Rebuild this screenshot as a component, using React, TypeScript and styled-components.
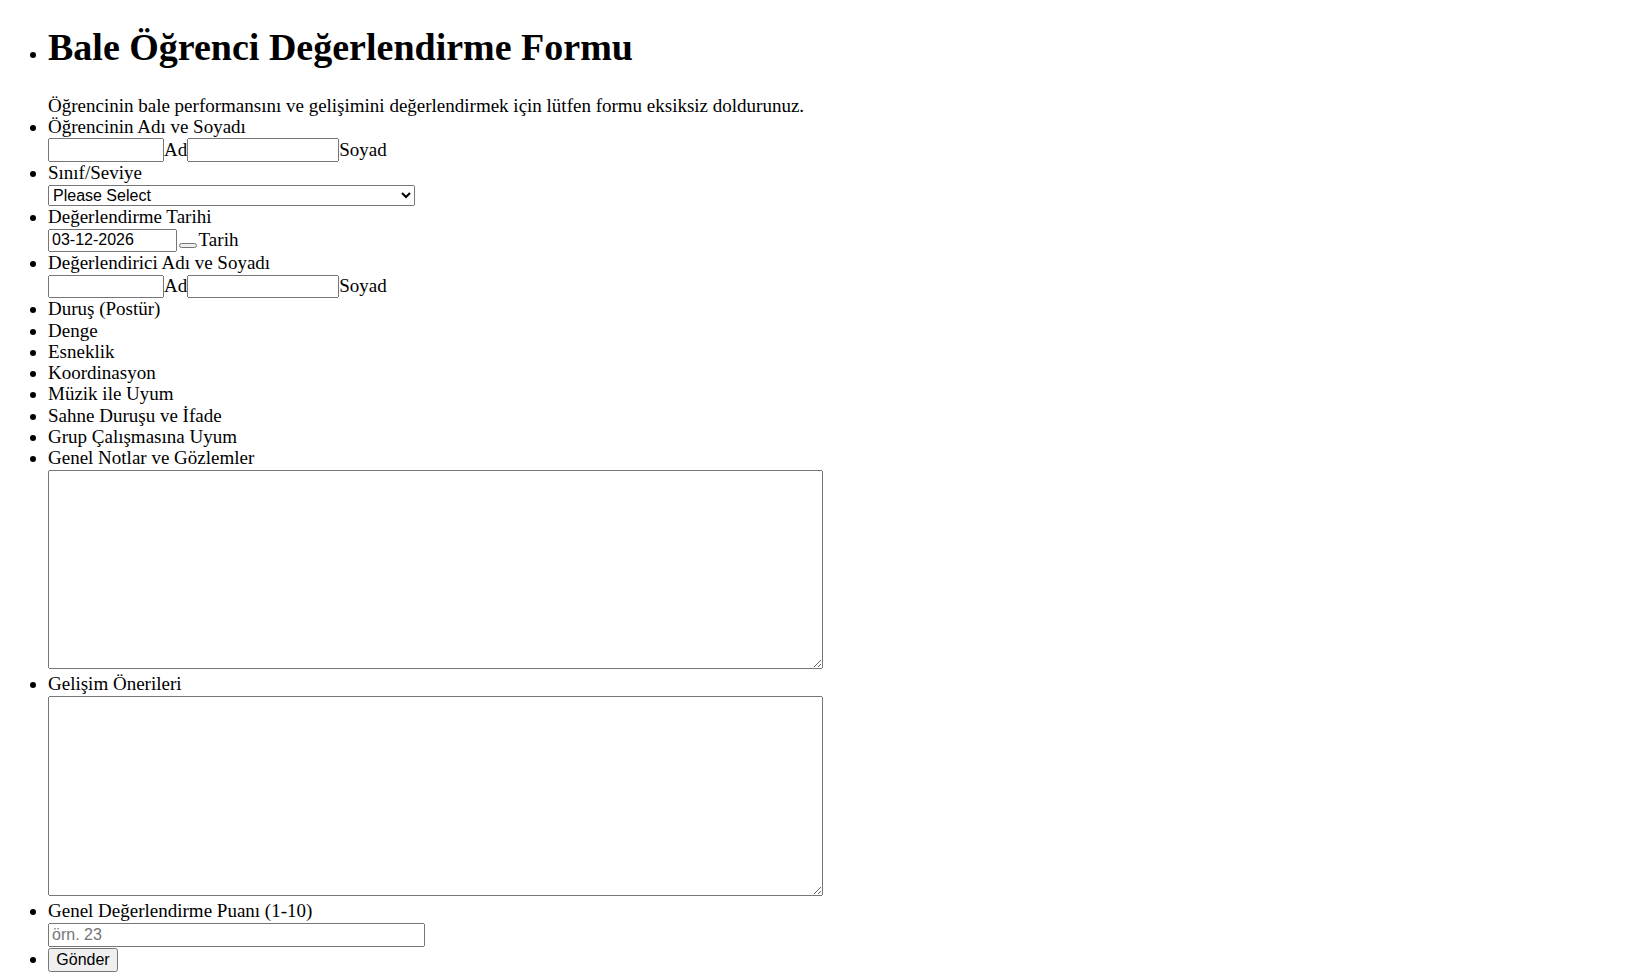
import React from "react";
import styled, { createGlobalStyle } from "styled-components";

const GlobalStyle = createGlobalStyle`
  html, body {
    margin: 0;
    padding: 0;
    background: #ffffff;
  }
  body {
    font-family: "Liberation Serif", "Times New Roman", serif;
    font-size: 19px;
    line-height: 21.3px;
    color: #000000;
  }
`;

const Form = styled.form`
  padding: 24.5px 8px 0 8px;
`;

const List = styled.ul`
  margin: 0;
  padding: 0 0 0 40px;
  list-style: disc outside;
`;

const Item = styled.li``;

const Title = styled.h1`
  margin: 0 0 26px 0;
  font-size: 38px;
  line-height: normal;
  font-weight: 700;
`;

const Intro = styled.div``;

const Label = styled.div``;

const Field = styled.div<{ $top: number; $bottom?: number }>`
  display: flex;
  align-items: flex-start;
  padding-top: ${(p) => p.$top}px;
  padding-bottom: ${(p) => p.$bottom ?? 0}px;
`;

const SubLabel = styled.label`
  margin-top: 0.3px;
  white-space: nowrap;
`;

const controlFont = `
  font-family: "Liberation Sans", Arial, sans-serif;
  font-size: 16px;
  line-height: normal;
`;

const TextInput = styled.input<{ $w: number }>`
  ${controlFont}
  box-sizing: border-box;
  width: ${(p) => p.$w}px;
  height: 23.4px;
  padding: 1px 2px;
  margin: 0;
  color: #000;
  flex: none;
`;

const Select = styled.select`
  ${controlFont}
  box-sizing: border-box;
  width: 367px;
  height: 21.4px;
  margin: 0;
  color: #000;
`;

const CalendarButton = styled.button`
  box-sizing: border-box;
  width: 18px;
  height: 5.6px;
  margin: 14px 2px 0 1.6px;
  padding: 0;
  flex: none;
`;

const NoteArea = styled.textarea<{ $h: number }>`
  box-sizing: border-box;
  width: 775px;
  height: ${(p) => p.$h}px;
  margin: 0;
  font-family: "Liberation Mono", monospace;
  font-size: 13px;
`;

const SubmitButton = styled.button`
  ${controlFont}
  box-sizing: border-box;
  width: 70px;
  height: 23.4px;
  padding: 1px 6px;
  margin: 1.6px 0 0 0;
  color: #000;
`;

const ratings = [
  "Duruş (Postür)",
  "Denge",
  "Esneklik",
  "Koordinasyon",
  "Müzik ile Uyum",
  "Sahne Duruşu ve İfade",
  "Grup Çalışmasına Uyum",
];

function NameField() {
  return (
    <Field $top={1.4}>
      <TextInput $w={116} type="text" />
      <SubLabel>Ad</SubLabel>
      <TextInput $w={152} type="text" />
      <SubLabel>Soyad</SubLabel>
    </Field>
  );
}

export default function App() {
  return (
    <>
      <GlobalStyle />
      <Form onSubmit={(e) => e.preventDefault()}>
        <List>
          <Item>
            <Title>Bale Öğrenci Değerlendirme Formu</Title>
            <Intro>
              Öğrencinin bale performansını ve gelişimini değerlendirmek için lütfen formu eksiksiz doldurunuz.
            </Intro>
          </Item>
          <Item>
            <Label>Öğrencinin Adı ve Soyadı</Label>
            <NameField />
          </Item>
          <Item>
            <Label>Sınıf/Seviye</Label>
            <Field $top={1.5}>
              <Select defaultValue="">
                <option value="">Please Select</option>
                <option value="1">Başlangıç</option>
                <option value="2">Orta</option>
                <option value="3">İleri</option>
              </Select>
            </Field>
          </Item>
          <Item>
            <Label>Değerlendirme Tarihi</Label>
            <Field $top={1.4}>
              <TextInput $w={129} type="text" defaultValue="03-12-2026" />
              <CalendarButton type="button" aria-label="Takvim" />
              <SubLabel>Tarih</SubLabel>
            </Field>
          </Item>
          <Item>
            <Label>Değerlendirici Adı ve Soyadı</Label>
            <NameField />
          </Item>
          {ratings.map((r) => (
            <Item key={r}>
              <Label>{r}</Label>
            </Item>
          ))}
          <Item>
            <Label>Genel Notlar ve Gözlemler</Label>
            <Field $top={1.3} $bottom={4.15}>
              <NoteArea $h={199} />
            </Field>
          </Item>
          <Item>
            <Label>Gelişim Önerileri</Label>
            <Field $top={1.9} $bottom={4.15}>
              <NoteArea $h={199.5} />
            </Field>
          </Item>
          <Item>
            <Label>Genel Değerlendirme Puanı (1-10)</Label>
            <Field $top={2.2}>
              <TextInput $w={377} type="text" placeholder="örn. 23" />
            </Field>
          </Item>
          <Item>
            <SubmitButton type="submit">Gönder</SubmitButton>
          </Item>
        </List>
      </Form>
    </>
  );
}
